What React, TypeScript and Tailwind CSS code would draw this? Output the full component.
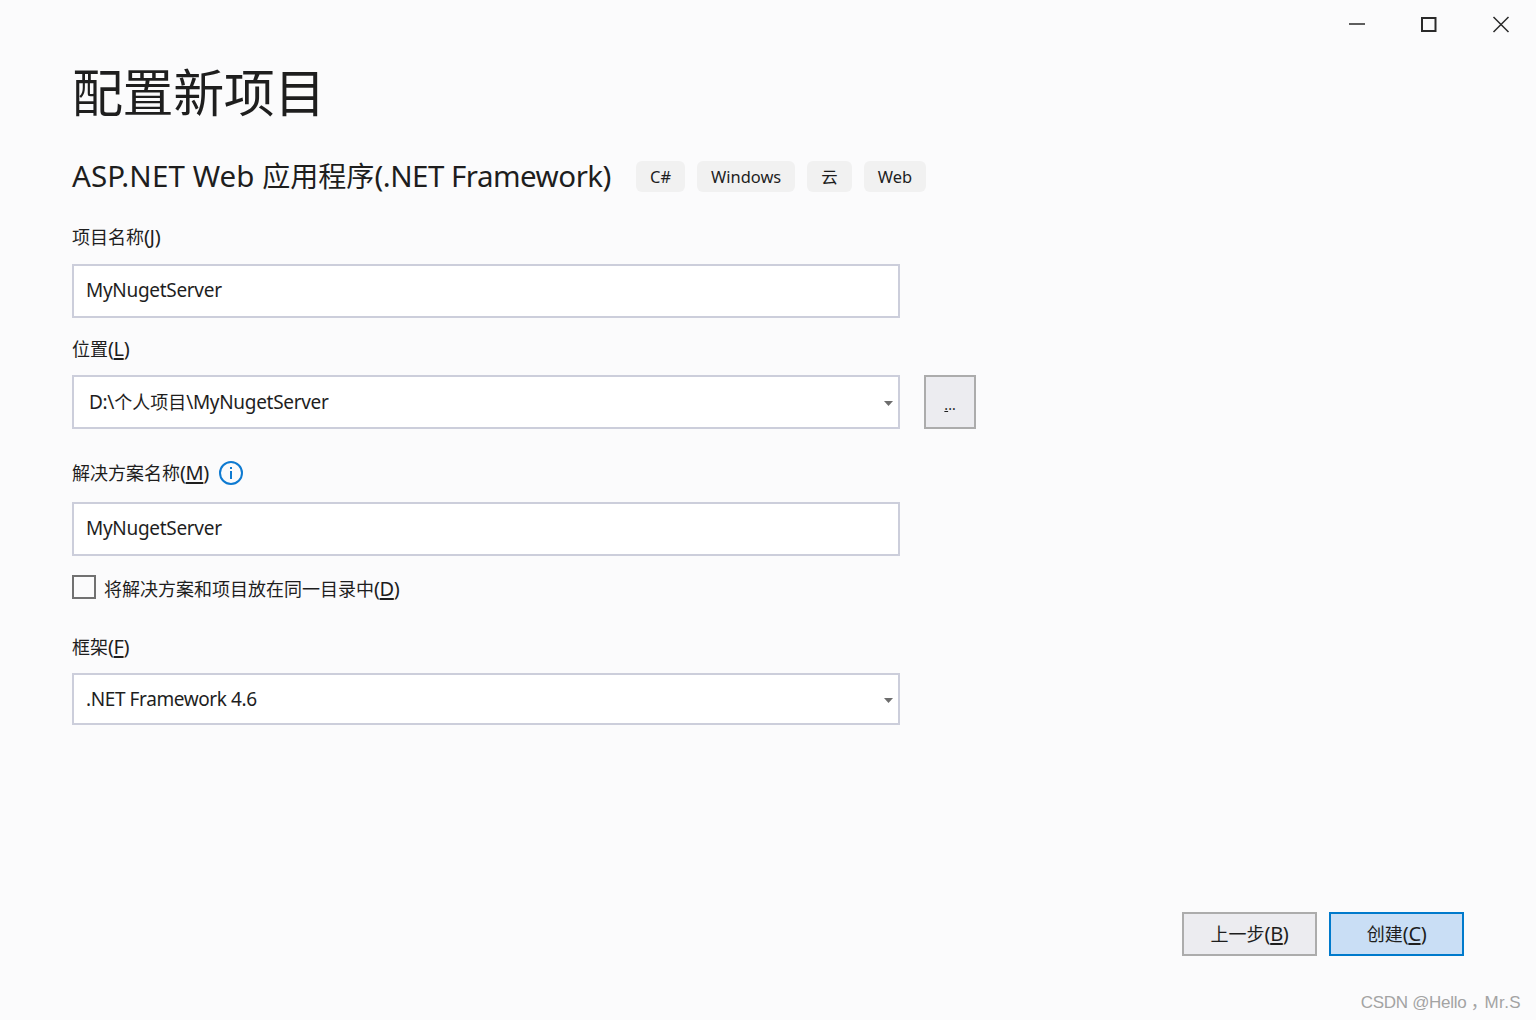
const tags = ['C#', 'Windows', '云', 'Web']

const font = { fontFamily: '"Noto Sans", "Noto Sans CJK SC", sans-serif' }

const Arrow = () => (
  <svg width="9" height="5" viewBox="0 0 9 5" className="mt-[2px] shrink-0">
    <path d="M0 0h9L4.5 5z" fill="#6d6d6d" />
  </svg>
)

const Hotkey = ({ k }: { k: string }) => (
  <span className="text-[20px] tracking-[-0.4px]">
    (<span className="underline underline-offset-2">{k}</span>)
  </span>
)

const Label = ({ text, hotkey, className }: { text: string; hotkey: string; className: string }) => (
  <div className={`flex h-9 items-center text-[18px] text-[#1e1e1e] ${className}`}>
    <span>
      {text}
      <Hotkey k={hotkey} />
    </span>
  </div>
)

const TextBox = ({ value, className }: { value: string; className: string }) => (
  <div className={`flex h-[54px] w-[828px] items-center border-2 border-[#cccedb] bg-white pb-[2px] pl-[12px] text-[19px] tracking-[-0.3px] text-[#1e1e1e] ${className}`}>
    {value}
  </div>
)

const Select = ({ children, height, padding }: { children: React.ReactNode; height: string; padding: string }) => (
  <div className={`flex w-[828px] items-center justify-between border-2 border-[#cccedb] bg-white pr-[5px] text-[19px] tracking-[-0.3px] text-[#1e1e1e] ${height} ${padding}`}>
    <span>{children}</span>
    <Arrow />
  </div>
)

const App = () => {
  return (
    <div className="relative flex h-[1020px] w-[1536px] flex-col overflow-hidden bg-[#fbfbfc]" style={font}>
      {/* window controls */}
      <div className="flex h-[49px] items-start justify-end gap-[48px] pt-[12px] pr-[23px]">
        <svg width="24" height="24" viewBox="0 0 24 24" fill="none" stroke="#2a2a2a">
          <path d="M4 12 H20" strokeWidth="1.5" />
        </svg>
        <svg width="24" height="24" viewBox="0 0 24 24" fill="none" stroke="#2a2a2a">
          <rect x="5" y="6" width="13.5" height="13" strokeWidth="2" />
        </svg>
        <svg width="24" height="24" viewBox="0 0 24 24" fill="none" stroke="#2a2a2a">
          <path d="M4.5 5 L19.5 20 M19.5 5 L4.5 20" strokeWidth="1.5" />
        </svg>
      </div>

      <div className="flex flex-1 flex-col pl-[72px]">
        <h1 className="flex h-[86px] items-center text-[51px] font-normal tracking-[-0.4px] text-[#1e1e1e]">配置新项目</h1>

        <div className="flex h-[83px] items-center">
          <h2 className="w-[564px] shrink-0 text-[29.5px] font-normal whitespace-nowrap text-[#1e1e1e]">
            <span className="tracking-[0.1px]">ASP.NET Web </span>
            <span className="text-[28px]">应用程序</span>
            <span className="tracking-[-0.5px]">(.NET Framework)</span>
          </h2>
          <div className="flex gap-[12px]">
            {tags.map((tag) => (
              <span key={tag} className="flex h-[31px] items-center rounded-[6px] bg-[#f1f1f1] px-[14px] pt-[2px] text-[16.45px] text-[#1e1e1e]">
                {tag}
              </span>
            ))}
          </div>
        </div>

        <Label text="项目名称" hotkey="J" className="mt-[1px]" />
        <TextBox value="MyNugetServer" className="mt-[9px]" />

        <Label text="位置" hotkey="L" className="mt-[13px]" />
        <div className="mt-[8px] flex gap-[24px]">
          <Select height="h-[54px]" padding="pl-[15px]">
            D:\<span className="text-[18px] tracking-normal">个人项目</span>\MyNugetServer
          </Select>
          <button className="flex h-[54px] w-[52px] items-center justify-center border-2 border-[#acacac] bg-[#ececf0] pt-[6px] text-[14px] leading-none text-[#1e1e1e]">
            <span>
              <span className="underline">.</span>..
            </span>
          </button>
        </div>

        <div className="mt-[26px] flex items-center gap-[10px]">
          <Label text="解决方案名称" hotkey="M" className="" />
          <svg width="24" height="24" viewBox="0 0 24 24" fill="none">
            <circle cx="12" cy="12" r="11" stroke="#0e7ad1" strokeWidth="2" />
            <rect x="11" y="10" width="2" height="8" fill="#0e7ad1" />
            <rect x="11" y="6" width="2" height="2" fill="#0e7ad1" />
          </svg>
        </div>
        <TextBox value="MyNugetServer" className="mt-[11px]" />

        <div className="mt-[19px] flex h-[24px] items-center gap-[8px] text-[18px] text-[#1e1e1e]">
          <span className="h-[24px] w-[24px] border-2 border-[#717171] bg-[#fbfbfc]" />
          <span className="pt-[4px]">
            将解决方案和项目放在同一目录中
            <Hotkey k="D" />
          </span>
        </div>

        <Label text="框架" hotkey="F" className="mt-[30px]" />
        <div className="mt-[8px]">
          <Select height="h-[52px]" padding="pl-[12px]">
            <span className="tracking-[-0.4px]">.NET Framework 4.6</span>
          </Select>
        </div>
      </div>

      {/* footer buttons */}
      <div className="flex justify-end gap-[12px] pr-[72px] pb-[64px]">
        <button className="flex h-[44px] w-[135px] items-center justify-center border-2 border-[#acacac] bg-[#ececf0] text-[18px] text-[#1e1e1e]">
          <span>
            上一步
            <Hotkey k="B" />
          </span>
        </button>
        <button className="flex h-[44px] w-[135px] items-center justify-center border-2 border-[#007acc] bg-[#c9def5] text-[18px] text-[#1e1e1e]">
          <span>
            创建
            <Hotkey k="C" />
          </span>
        </button>
      </div>

      <div className="absolute right-[15px] bottom-[5px] text-[17px] tracking-[-0.3px] text-[#a3a3a3]" style={{ fontFamily: '"Liberation Sans", "Noto Sans CJK SC", sans-serif' }}>
        CSDN @Hello <span className="-mr-[3px]">，</span>
        <span className="tracking-[0.4px]">Mr.S</span>
      </div>
    </div>
  )
}

export default App
